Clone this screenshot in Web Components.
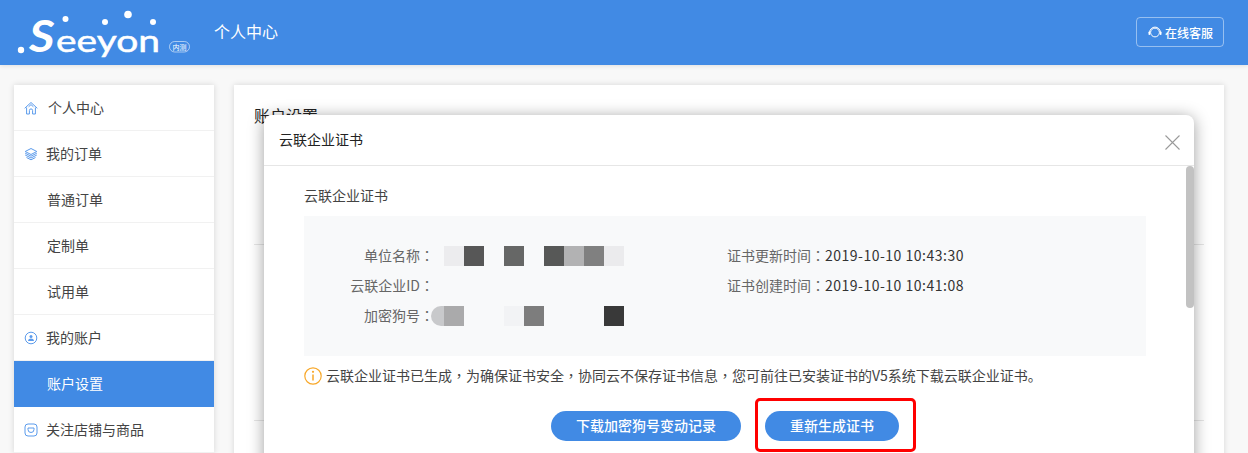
<!DOCTYPE html>
<html lang="zh">
<head>
<meta charset="utf-8">
<title>个人中心</title>
<style>
  html, body { margin: 0; height: 100%; overflow: hidden; background: #f8f8f8; }
  body { font-family: "Noto Sans CJK SC", "Liberation Sans", sans-serif; font-size: 14px; color: #333; }
</style>
</head>
<body>
<app-shell>
  <app-header slot="top"></app-header>
  <side-nav slot="side">
    <nav-item icon="home" offset="10">个人中心</nav-item>
    <nav-item icon="layers" offset="8">我的订单</nav-item>
    <nav-item sub>普通订单</nav-item>
    <nav-item sub>定制单</nav-item>
    <nav-item sub>试用单</nav-item>
    <nav-item icon="user" offset="8">我的账户</nav-item>
    <nav-item sub active>账户设置</nav-item>
    <nav-item icon="shop" offset="8">关注店铺与商品</nav-item>
  </side-nav>
  <account-card slot="main"></account-card>
</app-shell>
<cert-dialog></cert-dialog>

<script>
const shellTemplate = document.createElement('template');
shellTemplate.innerHTML = `
  <style>
    :host { display: block; }
    .body { display: flex; gap: 20px; padding: 20px 24px 0 14px; }
    .side { display: block; flex: 0 0 200px; }
    .main { display: block; flex: 1; }
  </style>
  <slot name="top"></slot>
  <div class="body">
    <div class="side"><slot name="side"></slot></div>
    <div class="main"><slot name="main"></slot></div>
  </div>
`;

class AppShell extends HTMLElement {
  constructor () {
    super();
    this.attachShadow({ mode: 'open' });
    this.shadowRoot.appendChild(shellTemplate.content.cloneNode(true));
  }
}

const headerTemplate = document.createElement('template');
headerTemplate.innerHTML = `
  <style>
    :host {
      display: flex;
      align-items: center;
      box-sizing: border-box;
      height: 65px;
      padding: 0 24px 1px 14px;
      background: #418ae4;
      color: #fff;
      box-shadow: 0 1px 4px rgba(0, 0, 0, 0.1);
    }
    svg.logo { display: block; flex: none; margin-bottom: -1px; }
    .title { margin-left: 22px; font-size: 16px; line-height: 24px; padding-bottom: 3px; }
    .service {
      display: flex;
      align-items: center;
      gap: 2px;
      margin-left: auto;
      height: 30px;
      width: 88px;
      box-sizing: border-box;
      justify-content: center;
      border: 1px solid rgba(255, 255, 255, 0.45);
      border-radius: 4px;
      font-size: 12px;
      font-weight: 500;
    }
    .service svg { display: block; }
  </style>
  <svg class="logo" width="178" height="65" viewBox="0 0 178 65">
    <circle cx="7" cy="50" r="3.2" fill="#fff"/>
    <circle cx="51.5" cy="19" r="3" fill="#fff"/>
    <circle cx="91" cy="22" r="3" fill="#fff"/>
    <circle cx="114" cy="14.5" r="3.8" fill="#fff"/>
    <circle cx="139" cy="22" r="3" fill="#fff"/>
    <text transform="translate(15 52) scale(1.15 1)" font-family="Lato, sans-serif" font-style="italic" font-weight="700" font-size="43" fill="#fff">S</text>
    <text x="42" y="52" font-family="Lato, sans-serif" font-weight="400" font-size="31" stroke="#fff" stroke-width="0.5" fill="#fff" textLength="104" lengthAdjust="spacingAndGlyphs">eeyon</text>
    <rect x="155.500" y="41.500" width="20" height="10.500" rx="5.200" fill="none" stroke="#fff" stroke-opacity="0.7" stroke-width="0.8"/>
    <text x="165.500" y="49.500" text-anchor="middle" font-size="7" fill="#fff">内测</text>
  </svg>
  <div class="title">个人中心</div>
  <div class="service">
    <svg width="16" height="16" viewBox="0 0 16 16" fill="none" stroke="#fff">
      <circle cx="8" cy="8.500" r="4.400" stroke-width="1"/>
      <path d="M2.600 8.500a5.400 5.400 0 0 1 10.800 0" stroke-width="1"/>
      <rect x="1.500" y="7.500" width="1.600" height="3.400" rx=".7" fill="#fff" stroke="none"/>
      <rect x="12.900" y="7.500" width="1.600" height="3.400" rx=".7" fill="#fff" stroke="none"/>
    </svg>
    <span>在线客服</span>
  </div>
`;

class AppHeader extends HTMLElement {
  constructor () {
    super();
    this.attachShadow({ mode: 'open' });
    this.shadowRoot.appendChild(headerTemplate.content.cloneNode(true));
  }
}

const navTemplate = document.createElement('template');
navTemplate.innerHTML = `
  <style>
    :host { display: block; background: #fff; box-shadow: 0 0 6px rgba(0, 0, 0, 0.14); }
  </style>
  <slot></slot>
`;

class SideNav extends HTMLElement {
  constructor () {
    super();
    this.attachShadow({ mode: 'open' });
    this.shadowRoot.appendChild(navTemplate.content.cloneNode(true));
  }
}

const navIcons = {
  home: '<path d="M.7 7.300 7 1.500l6.300 5.800M2.600 6.500V13h2.800V9.500a1.600 1.600 0 0 1 3.200 0V13h2.800V6.500M4.600 5.800 7 3.600l2.400 2.200"/>',
  layers: '<path d="M7 1.500 12.800 4.500 7 7.500 1.200 4.500zM1.200 6.200 7 9.200l5.800-3M1.200 8 7 11l5.800-3M2.500 10.500 7 12.800l4.500-2.300"/>',
  user: '<circle cx="7" cy="7" r="5.800"/><circle cx="7" cy="5.600" r="1.500" fill="#5b9bec" stroke="none"/><path d="M4 10c.3-2 1.500-2.600 3-2.600s2.700.6 3 2.600z" fill="#5b9bec" stroke="none"/>',
  shop: '<rect x="1" y="1" width="12" height="12" rx="3"/><path d="M4 5h6v1.500a3 3 0 0 1-6 0z"/>'
};

const itemTemplate = document.createElement('template');
itemTemplate.innerHTML = `
  <style>
    :host {
      display: flex;
      align-items: center;
      box-sizing: border-box;
      height: 46px;
      padding-left: 10px;
      border-bottom: 1px solid #f1f1f1;
      color: #444;
      font-size: 14px;
    }
    :host([active]) { background: #418ae4; color: #fff; border-bottom-color: #418ae4; }
    :host([sub]) { padding-left: 33px; }
    svg { display: block; flex: none; fill: none; stroke: #5b9bec; stroke-width: 1; }
    .label { padding-bottom: 2px; }
  </style>
  <svg width="14" height="14" viewBox="0 0 14 14"></svg>
  <span class="label"><slot></slot></span>
`;

class NavItem extends HTMLElement {
  constructor () {
    super();
    this.attachShadow({ mode: 'open' });
    this.shadowRoot.appendChild(itemTemplate.content.cloneNode(true));
  }

  connectedCallback () {
    const svg = this.shadowRoot.querySelector('svg');
    const icon = this.getAttribute('icon');
    if (icon) {
      svg.innerHTML = navIcons[icon];
      this.shadowRoot.querySelector('.label').style.marginLeft = `${this.getAttribute('offset') || 6}px`;
    } else {
      svg.remove();
    }
  }
}

const cardTemplate = document.createElement('template');
cardTemplate.innerHTML = `
  <style>
    :host {
      display: block;
      height: 500px;
      padding: 18px 20px 0;
      background: #fff;
      box-shadow: 0 0 6px rgba(0, 0, 0, 0.14);
    }
    h2 { margin: 0; font-size: 16px; font-weight: 400; line-height: 24px; color: #222; }
    .row { height: 175px; border-top: 1px solid #e6e6e6; }
    .first { margin-top: 117px; }
  </style>
  <h2>账户设置</h2>
  <div class="row first"></div>
  <div class="row"></div>
`;

class AccountCard extends HTMLElement {
  constructor () {
    super();
    this.attachShadow({ mode: 'open' });
    this.shadowRoot.appendChild(cardTemplate.content.cloneNode(true));
  }
}

const maskTemplate = document.createElement('template');
maskTemplate.innerHTML = `
  <style>
    :host { display: flex; height: 20px; }
    i { display: block; width: 20px; height: 20px; flex: none; }
    i.cap { width: 13px; border-radius: 13px 0 0 13px; }
  </style>
`;

// blurred-out value, one colour per 20px block
class MaskedValue extends HTMLElement {
  constructor () {
    super();
    this.attachShadow({ mode: 'open' });
    this.shadowRoot.appendChild(maskTemplate.content.cloneNode(true));
  }

  connectedCallback () {
    const blocks = (this.getAttribute('blocks') || '').split(' ');
    blocks.forEach(color => {
      const block = document.createElement('i');
      if (color.startsWith('cap:')) {
        block.className = 'cap';
        color = color.slice(4);
      }
      block.style.background = color;
      this.shadowRoot.appendChild(block);
    });
  }
}

const pillTemplate = document.createElement('template');
pillTemplate.innerHTML = `
  <style>
    :host {
      display: flex;
      align-items: center;
      justify-content: center;
      box-sizing: border-box;
      height: 30px;
      padding: 0 25px 2px;
      border-radius: 15px;
      background: #418ae4;
      color: #fff;
      font-size: 14px;
      font-weight: 500;
    }
  </style>
  <slot></slot>
`;

class PillButton extends HTMLElement {
  constructor () {
    super();
    this.attachShadow({ mode: 'open' });
    this.shadowRoot.appendChild(pillTemplate.content.cloneNode(true));
  }
}

const dialogTemplate = document.createElement('template');
dialogTemplate.innerHTML = `
  <style>
    :host {
      position: absolute;
      left: 264px;
      top: 115px;
      width: 930px;
      height: 400px;
      display: flex;
      flex-direction: column;
      background: #fff;
      border-radius: 8px 8px 0 0;
      box-shadow: 0 2px 16px rgba(0, 0, 0, 0.38);
      color: #444;
      font-size: 14px;
    }
    .head {
      flex: none;
      display: flex;
      align-items: center;
      justify-content: space-between;
      box-sizing: border-box;
      height: 51px;
      padding: 0 14px 2px 15px;
      border-bottom: 1px solid #e6e6e6;
      color: #222;
    }
    .head svg { display: block; margin-top: 6px; }
    .scroll { flex: 1; display: flex; min-height: 0; }
    .content { flex: 1; padding: 19px 40px 0; }
    .bar { flex: none; width: 8px; }
    .bar i { display: block; height: 142px; border-radius: 4px; background: #c2c2c2; }
    h3 { margin: 0 0 11px; font-size: 14px; font-weight: 400; line-height: 20px; color: #444; }
    .panel {
      display: grid;
      grid-template-columns: 423px 1fr;
      grid-auto-rows: 30px;
      align-content: center;
      height: 140px;
      background: #f8f9fa;
    }
    .field { display: flex; align-items: center; position: relative; box-sizing: border-box; padding-bottom: 2px; }
    .key { flex: 0 0 130px; text-align: right; color: #666; white-space: nowrap; }
    .time { color: #333; white-space: nowrap; }
    .time span { color: #666; }
    .time b { font-weight: 400; letter-spacing: 0.5px; }
    .mark { font-family: "Noto Sans CJK TC", sans-serif; }
    masked-value { position: absolute; top: 5px; }
    .notice { display: flex; align-items: center; gap: 4px; margin-top: 10px; height: 20px; color: #444; white-space: nowrap; }
    .notice svg { display: block; flex: none; }
    .notice > span { padding-bottom: 2px; }
    .actions { display: flex; justify-content: center; gap: 24px; margin-top: 25px; }
    .highlight {
      position: absolute;
      left: 491px;
      top: 283px;
      width: 161px;
      height: 54px;
      box-sizing: border-box;
      border: 3px solid #f00;
      border-radius: 5px;
    }
  </style>
  <div class="head">
    <span>云联企业证书</span>
    <svg width="15" height="15" viewBox="0 0 15 15" fill="none" stroke="#9a9a9a" stroke-width="1.100"><path d="M.5.5l14 14M14.500.5l-14 14"/></svg>
  </div>
  <div class="scroll">
    <div class="content">
      <h3>云联企业证书</h3>
      <div class="panel">
        <div class="field"><span class="key">单位名称<span class="mark" lang="zh-TW">：</span></span><masked-value style="left:140px" blocks="#ececee #575757 transparent #666766 transparent #575857 #b2b2b3 #808080 #ebebed"></masked-value></div>
        <div class="field time"><span>证书更新时间<span class="mark" lang="zh-TW">：</span></span><b>2019-10-10 10:43:30</b></div>
        <div class="field"><span class="key">云联企业ID<span class="mark" lang="zh-TW">：</span></span></div>
        <div class="field time"><span>证书创建时间<span class="mark" lang="zh-TW">：</span></span><b>2019-10-10 10:41:08</b></div>
        <div class="field"><span class="key">加密狗号<span class="mark" lang="zh-TW">：</span></span><masked-value style="left:127px" blocks="cap:#c8c9cb #aaaaab transparent transparent #f2f3f5 #7d7d7d transparent transparent transparent #393939"></masked-value></div>
      </div>
      <div class="notice">
        <svg width="18" height="18" viewBox="0 0 18 18" fill="none" stroke="#f8a82a"><circle cx="9" cy="9" r="8.200" stroke-width="1.200"/><path d="M9 7.500v6" stroke-width="1.500"/><circle cx="9" cy="4.800" r="1.100" fill="#f8a82a" stroke="none"/></svg>
        <span>云联企业证书已生成<span class="mark" lang="zh-TW">，</span>为确保证书安全<span class="mark" lang="zh-TW">，</span>协同云不保存证书信息<span class="mark" lang="zh-TW">，</span>您可前往已安装证书的V5系统下载云联企业证书。</span>
      </div>
      <div class="actions">
        <pill-button>下载加密狗号变动记录</pill-button>
        <pill-button>重新生成证书</pill-button>
      </div>
    </div>
    <div class="bar"><i></i></div>
  </div>
  <div class="highlight"></div>
`;

class CertDialog extends HTMLElement {
  constructor () {
    super();
    this.attachShadow({ mode: 'open' });
    this.shadowRoot.appendChild(dialogTemplate.content.cloneNode(true));
  }
}

window.customElements.define('app-shell', AppShell);
window.customElements.define('app-header', AppHeader);
window.customElements.define('side-nav', SideNav);
window.customElements.define('nav-item', NavItem);
window.customElements.define('account-card', AccountCard);
window.customElements.define('masked-value', MaskedValue);
window.customElements.define('pill-button', PillButton);
window.customElements.define('cert-dialog', CertDialog);
</script>
</body>
</html>
